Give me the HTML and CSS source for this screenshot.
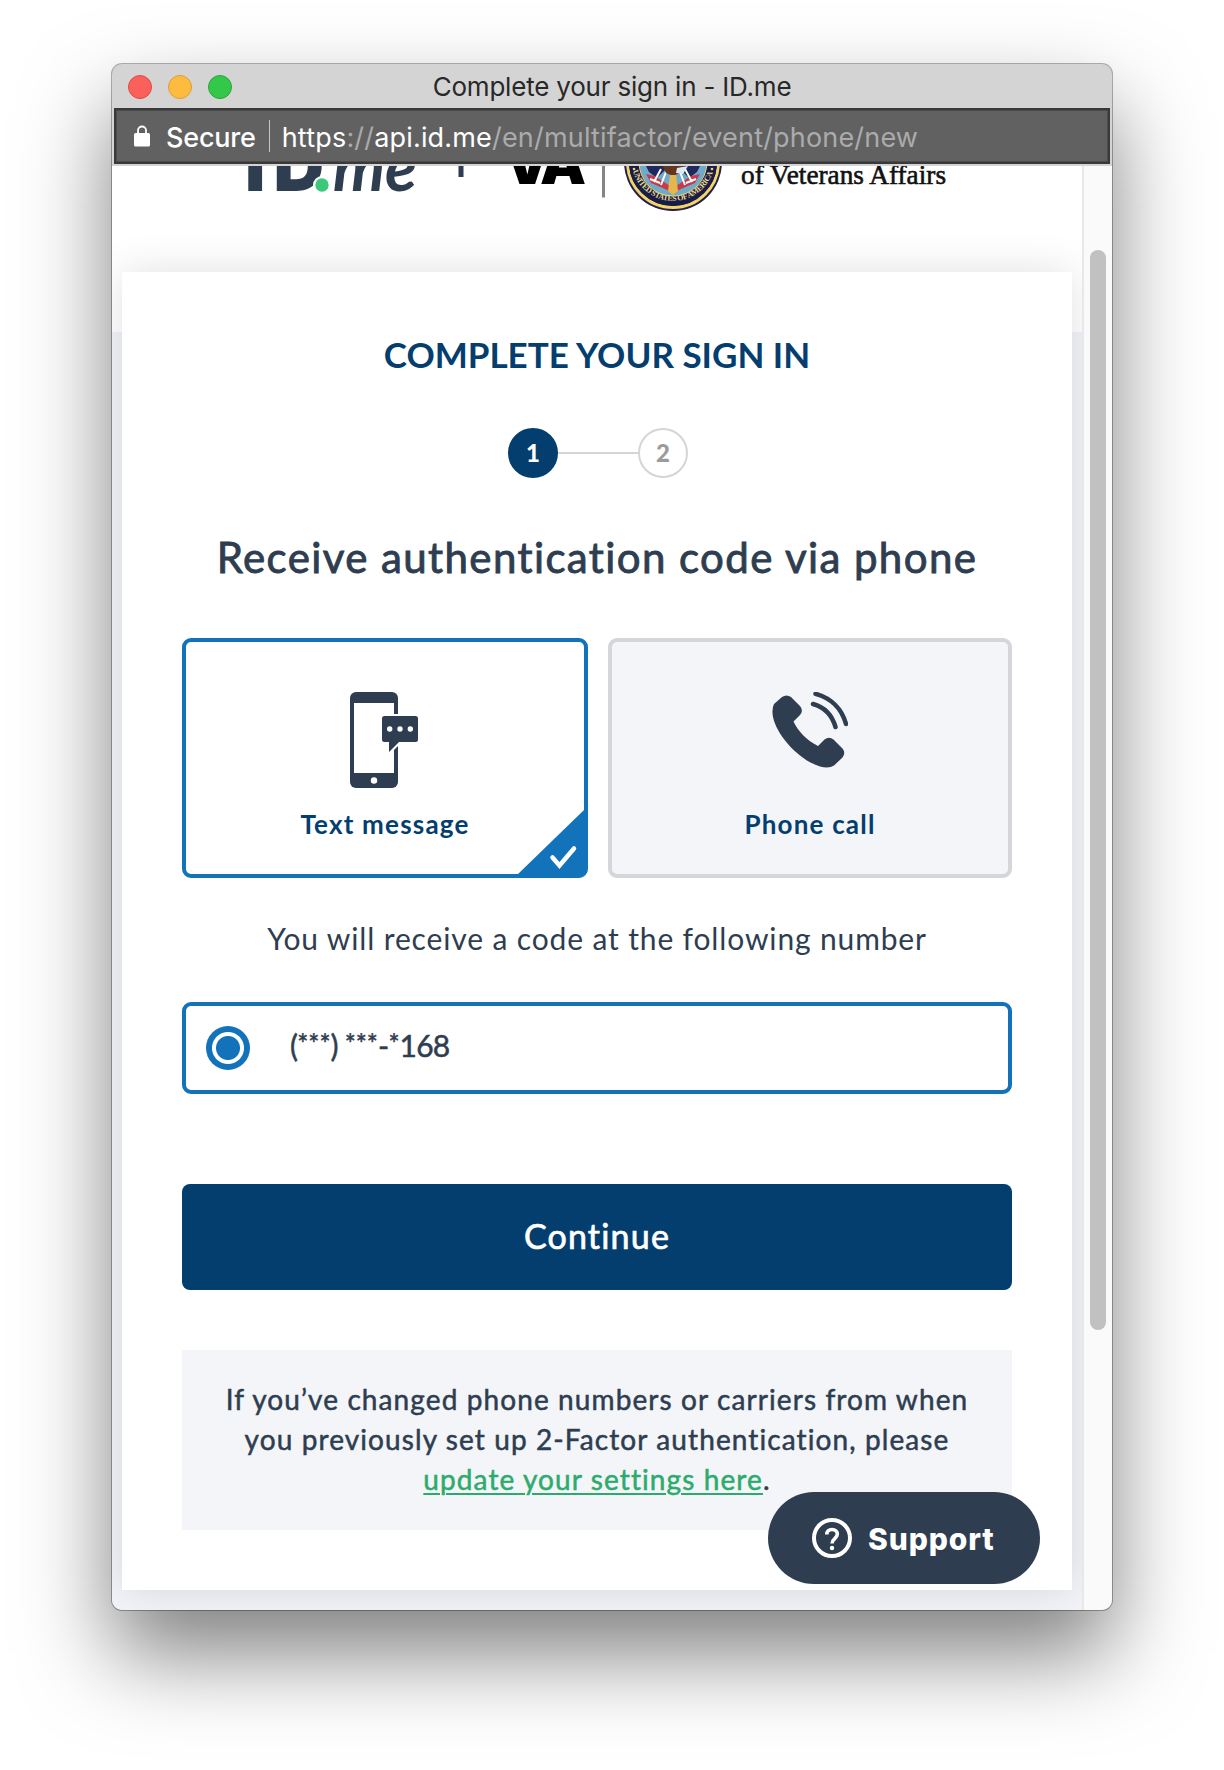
FILE: index.html
```html
<!DOCTYPE html>
<html lang="en">
<head>
<meta charset="utf-8">
<title>Complete your sign in - ID.me</title>
<link rel="stylesheet" href="styles.css">
</head>
<body>
<div class="window">
  <div class="titlebar">
    <div class="lights"><i class="light red"></i><i class="light yellow"></i><i class="light green"></i></div>
    <span class="window-title">Complete your sign in - ID.me</span>
  </div>
  <div class="urlbar">
    <svg class="lock" width="16" height="22" viewBox="0 0 16 22"><path d="M4 9V5.500a4 4 0 0 1 8 0V9" fill="none" stroke="#fff" stroke-width="1.800"/><rect y="8" width="16" height="13.500" rx="1.500" fill="#fff"/></svg>
    <span class="secure">Secure</span>
    <i class="url-divider"></i>
    <span class="url">https<em>://</em>api.id.me<em>/en/multifactor/event/phone/new</em></span>
  </div>
  <div class="viewport">
    <div class="page">
      <header class="brand">
        <svg width="970" height="60" viewBox="112 166 970 60">
          <g fill="#2e3d50">
            <text class="idme" x="245" y="191" textLength="79">ID</text>
            <text class="me" x="333" y="191" textLength="84" lengthAdjust="spacingAndGlyphs">me</text>
            <rect x="458.500" y="160" width="5" height="17"/>
          </g>
          <circle cx="322" cy="185" r="9" fill="#fff"/>
          <circle cx="322" cy="185" r="6.700" fill="#3bc878"/>
          <text class="va" x="504" y="184" textLength="82">VA</text>
          <rect x="602" y="160" width="3" height="37.500" fill="#858585"/>
          <circle cx="673" cy="162" r="49" fill="#251f48"/>
          <circle cx="673" cy="162" r="45.500" fill="none" stroke="#f0d568" stroke-width="3"/>
          <circle cx="673" cy="162" r="39" fill="none" stroke="#191b48" stroke-width="10"/>
          <circle cx="673" cy="162" r="34" fill="#70aacb" stroke="#e8cf70"/>
          <path d="M643 160l6 12 8 6 12-12zM703 160l-6 12-8 6-12-12z" fill="#20285e"/>
          <path d="M646 174l9 2 18 12 18-12 9-2-5 9-14 6-8 4-8-4-14-6z" fill="#cb3949"/>
          <path d="M654 182l7-13M661 185l5-13M692 182l-7-13M685 185l-5-13M650 179l10 4M696 179l-10 4" stroke="#fff" stroke-width="2"/>
          <path d="M662 164h23l-5 9-7 3-7-3z" fill="#663520"/>
          <path d="M677 168l11-2-5 8-7-1z" fill="#dce9f4"/>
          <path d="M670 175h6l2 16-5 4-5-4z" fill="#e6b64c"/>
          <path id="seal-arc" d="M632 168a42 42 0 0 0 82 0" fill="none"/>
          <text class="seal-text"><textPath href="#seal-arc" startOffset="3" textLength="106">UNITED STATES OF AMERICA</textPath></text>
          <circle cx="634" cy="169" r="1.300" fill="#f0d568"/><circle cx="712" cy="169" r="1.300" fill="#f0d568"/>
          <text class="veterans" x="741" y="184" textLength="205" lengthAdjust="spacingAndGlyphs">of Veterans Affairs</text>
        </svg>
      </header>
      <main class="card">
        <h1 class="card-title">COMPLETE YOUR SIGN IN</h1>
        <div class="steps"><span class="step active">1</span><i class="step-line"></i><span class="step">2</span></div>
        <h2 class="subtitle">Receive authentication code via phone</h2>
        <div class="options">
          <div class="option selected">
            <svg class="phone-icon" width="68" height="96" viewBox="0 0 68 96">
              <rect width="48" height="96" rx="6" fill="#2e3d50"/><path d="M4 11h40v70H4z" fill="#fff"/>
              <circle cx="24" cy="88.500" r="3.200" fill="#fff"/>
              <path d="M30 22h20v32L38 65h-8z" fill="#fff"/><path d="M44 58l4-4v27h-4z" fill="#2e3d50"/>
              <path d="M34.500 24h31a2.500 2.500 0 0 1 2.500 2.500v21a2.500 2.500 0 0 1-2.500 2.500H49L39 60v-10h-4.500a2.500 2.500 0 0 1-2.500-2.500v-21a2.500 2.500 0 0 1 2.500-2.500z" fill="#2e3d50"/>
              <g fill="#fff"><circle cx="39.700" cy="37" r="2.700"/><circle cx="50" cy="37" r="2.700"/><circle cx="60.300" cy="37" r="2.700"/></g>
            </svg>
            <span class="option-label">Text message</span>
            <svg class="corner" width="66" height="64" viewBox="0 0 66 64"><path d="M66 0v64H0z" fill="#1272ba"/><path d="M34.500 47.500l7 8 14.500-17" fill="none" stroke="#fff" stroke-width="4.500" stroke-linecap="round"/></svg>
          </div>
          <div class="option">
            <svg width="76" height="96" viewBox="0 0 76 96">
              <path d="M2 12L10 5Q14.500 1.800 19 5l9 9q3.800 4.500 0 9l-6.500 6.500C26 39 34 48 46 54l6.500-6.500q4.500-3.500 9 0l9 9q3.500 4.500 0 9L62 73.500q-5 3.500-14 1C27 68 5 44 1 25Q-.5 17 2 12z" fill="#2e3d50"/>
              <path d="M41 12C52 15 60 23 63.500 35M43.500 1.800C59 6 70 17 74 32" fill="none" stroke="#2e3d50" stroke-width="4.500" stroke-linecap="round"/>
            </svg>
            <span class="option-label">Phone call</span>
          </div>
        </div>
        <p class="hint">You will receive a code at the following number</p>
        <div class="number"><i class="radio"></i><span class="masked">(<b>***</b>) <b>***</b>-<b>*</b>168</span></div>
        <div class="continue"><span>Continue</span></div>
        <div class="notice">
          <p>If you’ve changed phone numbers or carriers from when</p>
          <p>you previously set up 2-Factor authentication, please</p>
          <p><a>update your settings here</a>.</p>
        </div>
      </main>
    </div>
    <div class="scroll"><i class="thumb"></i></div>
    <div class="support">
      <svg width="40" height="40" viewBox="0 0 40 40"><circle cx="20" cy="20" r="18" fill="none" stroke="#fff" stroke-width="4"/><path d="M14.800 16.500c0-3 2-5 5.200-5s5.300 2 5.300 4.800c0 4.200-5.300 4.500-5.300 9.200" fill="none" stroke="#fff" stroke-width="3.600"/><circle cx="20" cy="30" r="2.200" fill="#fff"/></svg>
      <span>Support</span>
    </div>
  </div>
</div>
</body>
</html>
```
FILE: styles.css
```css
* { box-sizing: border-box; }
body { margin: 0; height: 1770px; overflow: hidden; background: #fff; padding: 64px 112px; color: #2e3d50; font-family: Lato, "Liberation Sans", sans-serif; font-variant-ligatures: none; }
p, h1, h2 { margin: 0; white-space: nowrap; }
.window { width: 1000px; height: 1546px; border-radius: 10px; overflow: hidden; background: #d4d4d4; display: flex; flex-direction: column; box-shadow: 0 0 0 1px rgba(0,0,0,.3), 0 44px 88px rgba(0,0,0,.5); }
.titlebar { height: 44px; flex: none; display: grid; grid-template-columns: 120px 1fr 120px; align-items: center; }
.lights { display: flex; gap: 16px; padding-left: 16px; }
.light { width: 24px; height: 24px; border-radius: 50%; border: 1px solid; }
.red { background: #fc605b; border-color: #dc4a47; }
.yellow { background: #fdbc40; border-color: #dc9f36; }
.green { background: #34c84a; border-color: #28a53a; }
.window-title { font: 26px/44px Inter, sans-serif; letter-spacing: -.2px; color: #282828; text-align: center; padding-top: 1px; }
.urlbar { height: 56px; flex: none; margin: 0 2px 2px; background: #616161; border: 2px solid #393939; box-shadow: inset 0 0 0 1px #4c4c4c; display: flex; align-items: center; padding: 0 18px; color: #fff; font: 27px/50px Inter, sans-serif; white-space: nowrap; }
.lock { margin-right: 16px; }
.secure { font-weight: 500; letter-spacing: -.2px; padding-top: 3px; }
.url-divider { width: 1px; height: 32px; background: #c4c4c4; margin: 0 12px 0 13px; }
.url { letter-spacing: .18px; padding-top: 3px; }
.url em { font-style: normal; color: #ababab; }
.viewport { flex: 1; display: flex; position: relative; min-height: 0; }
.page { width: 970px; background: linear-gradient(#fff 166px, #f2f4f9 166px); }
.brand { height: 106px; }
.brand svg { display: block; }
.idme { font: 900 70px Inter, sans-serif; }
.me { font: italic 700 66px Lato, sans-serif; }
.va { font: 900 58px Inter, sans-serif; fill: #000; }
.seal-text { font: 700 8px "Liberation Serif", serif; fill: #e7d98a; }
.veterans { font: 28px "Liberation Serif", serif; fill: #111; stroke: #111; stroke-width: .6px; }
.card { width: 950px; height: 1318px; margin: 0 10px; padding: 58px 60px 0; background: #fff; box-shadow: 0 0 40px rgba(0,0,0,.12); display: flex; flex-direction: column; align-items: center; }
.card-title { font: 700 35px/48px Lato, sans-serif; color: #043e6f; }
.steps { display: flex; align-items: center; margin: 50px 0 0 2px; }
.step { width: 50px; height: 50px; border-radius: 50%; border: 2px solid #d5d5d5; color: #9b9b9b; font: 900 24px/46px Lato, sans-serif; text-align: center; }
.step.active { background: #043e6f; border-color: #043e6f; color: #fff; }
.step-line { width: 80px; height: 2px; background: #d5d5d5; }
.subtitle { margin-top: 49px; height: 61px; font: 400 42px/60px Lato, sans-serif; letter-spacing: 1.4px; -webkit-text-stroke: .9px; }
.options { width: 830px; margin-top: 50px; display: grid; grid-template-columns: 406px 404px; gap: 20px; }
.option { position: relative; height: 240px; border: 4px solid #d5d6d9; border-radius: 9px; background: #f3f5f9; display: flex; flex-direction: column; align-items: center; padding-top: 50px; }
.selected { background: #fff; border-color: #1272ba; }
.phone-icon { margin-right: 2px; }
.option-label { margin-top: 16px; font: 700 26px/40px Lato, sans-serif; letter-spacing: 1.2px; color: #043e6f; }
.corner { position: absolute; right: 0; bottom: 0; }
.hint { margin-top: 40px; height: 42px; font: 400 30px/40px Lato, sans-serif; letter-spacing: .86px; }
.number { width: 830px; height: 92px; margin-top: 42px; border: 4px solid #1272ba; border-radius: 9px; display: flex; align-items: center; gap: 40px; padding-left: 20px; }
.masked { font: 400 30px/40px Lato, sans-serif; letter-spacing: -.7px; -webkit-text-stroke: .5px; padding-bottom: 7px; }
.masked b { font-size: 26px; font-weight: 400; line-height: 1; letter-spacing: 0; vertical-align: 3px; }
.radio { width: 44px; height: 44px; border-radius: 50%; background: radial-gradient(circle, #1272ba 11.500px, #fff 12.500px, #fff 15.500px, #1272ba 16.500px); }
.continue { width: 830px; height: 106px; margin-top: 90px; border-radius: 8px; background: #043e6f; color: #fff; text-align: center; font: 400 34px/104px Lato, sans-serif; letter-spacing: 1.2px; -webkit-text-stroke: .7px; }
.notice { width: 830px; height: 180px; margin-top: 60px; padding-top: 29px; background: #f3f5f9; text-align: center; font: 400 28px/40px Lato, sans-serif; letter-spacing: 1.1px; -webkit-text-stroke: .5px; }
.notice a { color: #2dab6d; text-decoration: underline; text-decoration-thickness: 2px; text-underline-offset: 3px; }
.scroll { width: 30px; background: #fafafa; border-left: 2px solid #e8e8e8; padding: 84px 0 0 6px; }
.thumb { display: block; width: 16px; height: 1080px; border-radius: 8px; background: #c1c1c1; }
.support { position: absolute; left: 656px; top: 1326px; width: 272px; height: 92px; border-radius: 46px; background: #2e3d50; color: #fff; display: flex; align-items: center; padding-left: 44px; gap: 16px; font: 800 30px/40px Inter, sans-serif; letter-spacing: .9px; }
.support span { padding-top: 2px; }
```
